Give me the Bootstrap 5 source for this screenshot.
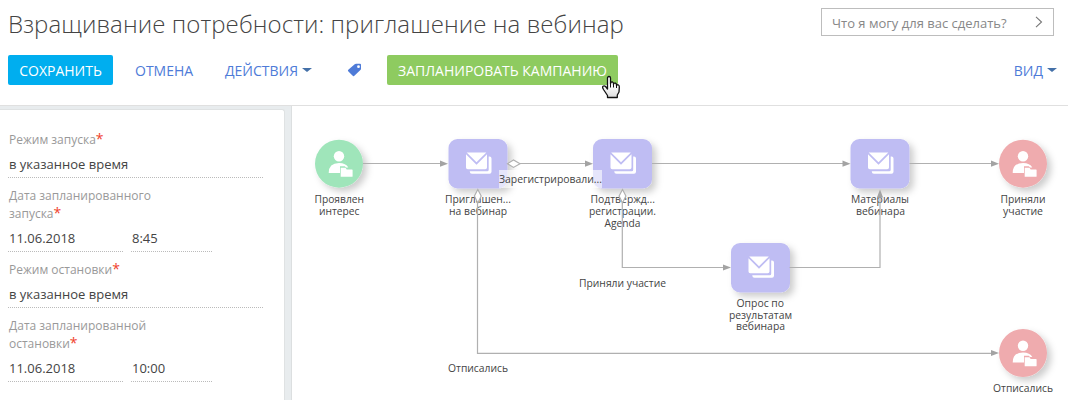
<!DOCTYPE html>
<html lang="ru">
<head>
<meta charset="utf-8">
<meta name="viewport" content="width=device-width, initial-scale=1">
<title>Взращивание потребности: приглашение на вебинар</title>
<link rel="stylesheet" href="https://cdn.jsdelivr.net/npm/bootstrap@5.3.0/dist/css/bootstrap.min.css">
<style>
body{font-family:"Open Sans",sans-serif;font-size:13px;color:#444;width:1068px;height:400px}
.page-head{height:106px;border-bottom:1px solid #e0e0e0}
.title-row{height:42px}
.page-title{font-size:24px;letter-spacing:.09px;font-weight:300;line-height:34px;margin:7px 0 0 8px;color:#444;white-space:nowrap}
.command{width:233px;height:28px;margin:8px 14px 0 0;border:1px solid #bdbdbd;color:#888;font-size:13px;line-height:18px;padding:0 10px}
.command span{padding-top:2px}
.tools{margin-top:13px;padding:0 11px 0 8px;height:30px}
.tools .btn{--bs-btn-border-radius:2px;--bs-btn-border-width:0;--bs-btn-padding-y:0;--bs-btn-font-size:14px;height:30px;line-height:32px;white-space:nowrap}
.btn-save,.btn-save:hover{background:#00aeef;color:#fff;width:105px}
.btn-plan,.btn-plan:hover{background:#8ecb60;color:#fff;width:231px;margin-left:25px}
.btn-flat,.btn-flat:hover{color:#4e7bd8}
.btn-cancel{width:90px;margin-left:22px}
.btn-actions{width:122px}
.btn-menu span{padding-top:2px}
.caret{width:0;height:0;border:5px solid transparent;border-top:4px solid #4470a8;border-bottom:0}
.pointer{position:absolute;left:601px;top:75px;z-index:3}
.side{width:292px;background:#e8ecee;border-right:1px solid #dcdfe0;padding-top:3px}
.panel{width:285px;border:1px solid #dfe2e3;border-left:0;border-bottom:0;border-top-right-radius:3px;padding:21px 0 0 8px}
.caption{font-size:12px;line-height:18px;color:#999;padding-left:1px;width:170px}
.caption b{color:#f0422c;font-weight:400;font-size:14px;line-height:12px}
.caption:not(:first-child){margin-top:9px}
.value{height:29px;line-height:30px;border-bottom:1px dotted #bbb;padding-left:1px;font-size:13px}
.value-wide{width:255px}
.value-date{width:115px}
.value-time{width:81px}
.diagram text{font-family:"Open Sans",sans-serif;font-size:11.3px;fill:#444}
</style>
</head>
<body class="bg-white overflow-hidden d-flex flex-column">
<header class="page-head flex-shrink-0">
  <div class="title-row d-flex justify-content-between align-items-start">
    <h1 class="page-title">Взращивание потребности: приглашение на вебинар</h1>
    <div class="command d-flex align-items-center justify-content-between"><span>Что я могу для вас сделать?</span>
      <svg width="8" height="12" viewBox="0 0 8 12" fill="none" stroke="#777" stroke-width="1.1"><path d="M1 .8 6.500 6 1 11.200"/></svg></div>
  </div>
  <nav class="tools d-flex align-items-center">
    <button class="btn btn-save px-0">СОХРАНИТЬ</button>
    <button class="btn btn-flat btn-cancel px-0 text-start">ОТМЕНА</button>
    <button class="btn btn-flat btn-menu btn-actions px-0 d-flex align-items-center"><span>ДЕЙСТВИЯ</span><i class="caret ms-1"></i></button>
    <svg width="15" height="14" viewBox="0 0 15 14"><path fill="#4e7bd8" fill-rule="evenodd" d="M7.700 1.200Q8.200.8 9 .8h4Q14 .8 14 1.800v4Q14 6.500 13.400 7.100L7.100 12.900Q6.400 13.500 5.700 12.800L1.200 8.300Q.5 7.500 1.300 6.800ZM11.500 2.300a1.400 1.400 0 1 0 0 2.800 1.400 1.400 0 0 0 0-2.800Z"/></svg>
    <button class="btn btn-plan px-0">ЗАПЛАНИРОВАТЬ КАМПАНИЮ</button>
    <button class="btn btn-flat btn-menu px-0 ms-auto d-flex align-items-center"><span>ВИД</span><i class="caret ms-1"></i></button>
  </nav>
</header>
<svg class="pointer" width="20" height="24" viewBox="0 0 20 24"><defs><linearGradient id="hand" x2="0" y2="1"><stop offset=".4" stop-color="#fff"/><stop offset="1" stop-color="#ddd"/></linearGradient></defs><path d="M6.500 14V3Q6.500 1.500 8 1.500T9.500 3V9Q9.700 6.500 11.500 7 12.700 7.400 12.500 9.500 12.800 7.700 14.500 8.200 15.600 8.700 15.500 10.500 16 9.300 17.500 10 18.500 10.500 18.300 12.500L18 17 16.300 20V22.500H6.500V20.500L2.500 14.500Q1 12 2 11.200 3.500 10.300 5 12Z" fill="url(#hand)" stroke="#111" stroke-width="1.3" stroke-linejoin="round"/><path d="M9.500 9v3.500M12.500 9.500v3M15.500 10.500v2.500" stroke="#111"/></svg>
<main class="d-flex flex-grow-1">
  <aside class="side d-flex flex-shrink-0">
    <div class="panel bg-white">
      <div class="caption">Режим запуска<b>*</b></div>
      <div class="value value-wide">в указанное время</div>
      <div class="caption">Дата запланированного запуска<b>*</b></div>
      <div class="d-flex gap-2"><div class="value value-date">11.06.2018</div><div class="value value-time">8:45</div></div>
      <div class="caption">Режим остановки<b>*</b></div>
      <div class="value value-wide">в указанное время</div>
      <div class="caption">Дата запланированной остановки<b>*</b></div>
      <div class="d-flex gap-2"><div class="value value-date">11.06.2018</div><div class="value value-time">10:00</div></div>
    </div>
  </aside>
  <svg class="diagram flex-shrink-0" width="776" height="294" viewBox="292 106 776 294">
    <defs>
      <filter id="shade" x="-30%" y="-30%" width="170%" height="170%"><feDropShadow dx="4" dy="4" stdDeviation="3.500" flood-color="#000" flood-opacity=".2"/></filter>
      <g id="mail">
        <rect x="-29.500" y="-25" width="59" height="49.500" rx="9" fill="#bfbdf3" filter="url(#shade)"/>
        <path d="M-11.300-11.500H8.300L-1.500-1.700Z" fill="#fff"/>
        <path d="M-12-9.700-1.500 .8 9-9.700V3.500Q9 5.300 7.200 5.300H-10.200Q-12 5.300-12 3.500Z" fill="#fff"/>
        <path d="M10.700-7.500H11.500Q13.500-7.500 13.500-5.500V7.700Q13.500 9.700 11.500 9.700H-6Q-8.200 9.700-8.300 7.200H9.200Q10.700 7.200 10.700 5.700Z" fill="#fff"/>
      </g>
      <g id="person" fill="#fff">
        <circle cx="0" cy="-7.300" r="5.200"/>
        <path d="M-10.300 9.500Q-10.300-.5 0-.5 7-.5 9.300 4H7L5.800 2.700H1V9.500Z"/>
        <path d="M1.700 4.200H6.500L7.700 5.900H13Q13.600 5.900 13.600 6.500V12.700Q13.600 13.300 13 13.300H1.700Z"/>
      </g>
      <path id="tip" d="M0 0-8-3.100V3.100Z" fill="#a3a3a3"/>
    </defs>
    <circle cx="339" cy="163.700" r="24" fill="#9fe5ba" filter="url(#shade)"/>
    <circle cx="1023" cy="163.700" r="24" fill="#efabae" filter="url(#shade)"/>
    <circle cx="1023" cy="353" r="24" fill="#efabae" filter="url(#shade)"/>
    <use href="#person" x="339" y="163.500"/><use href="#person" x="1023" y="163.500"/><use href="#person" x="1023" y="353"/>
    <use href="#mail" x="478" y="164"/><use href="#mail" x="622.500" y="164"/><use href="#mail" x="880" y="164"/><use href="#mail" x="760.500" y="268"/>
    <rect x="499" y="170" width="103" height="18" fill="#fff" fill-opacity=".6"/>
    <g>
      <text x="314.500" y="203" textLength="49.500" lengthAdjust="spacingAndGlyphs">Проявлен</text>
      <text x="319" y="215" textLength="40.500" lengthAdjust="spacingAndGlyphs">интерес</text>
      <text x="445" y="203" textLength="66" lengthAdjust="spacingAndGlyphs">Приглашен...</text>
      <text x="449" y="215" textLength="58" lengthAdjust="spacingAndGlyphs">на вебинар</text>
      <text x="499" y="183" textLength="103" lengthAdjust="spacingAndGlyphs">Зарегистрировали...</text>
      <text x="590.500" y="203" textLength="64.500" lengthAdjust="spacingAndGlyphs">Подтвержд...</text>
      <text x="589" y="215" textLength="67" lengthAdjust="spacingAndGlyphs">регистрации.</text>
      <text x="604.500" y="227" textLength="36" lengthAdjust="spacingAndGlyphs">Agenda</text>
      <text x="851" y="203" textLength="58" lengthAdjust="spacingAndGlyphs">Материалы</text>
      <text x="856" y="215" textLength="49" lengthAdjust="spacingAndGlyphs">вебинара</text>
      <text x="1000.500" y="203" textLength="45" lengthAdjust="spacingAndGlyphs">Приняли</text>
      <text x="1003" y="215" textLength="40" lengthAdjust="spacingAndGlyphs">участие</text>
      <text x="579" y="287" textLength="87" lengthAdjust="spacingAndGlyphs">Приняли участие</text>
      <text x="736.500" y="307" textLength="47.500" lengthAdjust="spacingAndGlyphs">Опрос по</text>
      <text x="729" y="319" textLength="63" lengthAdjust="spacingAndGlyphs">результатам</text>
      <text x="736" y="330" textLength="49" lengthAdjust="spacingAndGlyphs">вебинара</text>
      <text x="448" y="372" textLength="60" lengthAdjust="spacingAndGlyphs">Отписались</text>
      <text x="993" y="392" textLength="60" lengthAdjust="spacingAndGlyphs">Отписались</text>
    </g>
    <g fill="none" stroke="#b0b0b0" stroke-width="1.200">
      <path d="M363 163.500H441M519 163.500H586M652 163.500H844M909.500 163.500H992M622.300 200V267.500H724M789.500 267.500H880V196M477.500 200V353.300H992"/>
      <path d="M507.500 163.700 513.500 160 520 163.700 513.500 167.400ZM477.800 189.500 481.200 196 477.800 203 474.400 196ZM622.500 189.500 625.900 196 622.500 203 619.100 196Z" fill="#fff"/>
    </g>
    <use href="#tip" x="448" y="163.700"/><use href="#tip" x="593" y="163.700"/><use href="#tip" x="850.500" y="163.700"/><use href="#tip" x="999" y="163.700"/><use href="#tip" x="731" y="267.500"/><use href="#tip" x="999" y="353"/>
    <use href="#tip" transform="translate(880 189.500) rotate(-90)"/>
  </svg>
</main>
<script src="https://cdn.jsdelivr.net/npm/bootstrap@5.3.0/dist/js/bootstrap.bundle.min.js"></script>
</body>
</html>
